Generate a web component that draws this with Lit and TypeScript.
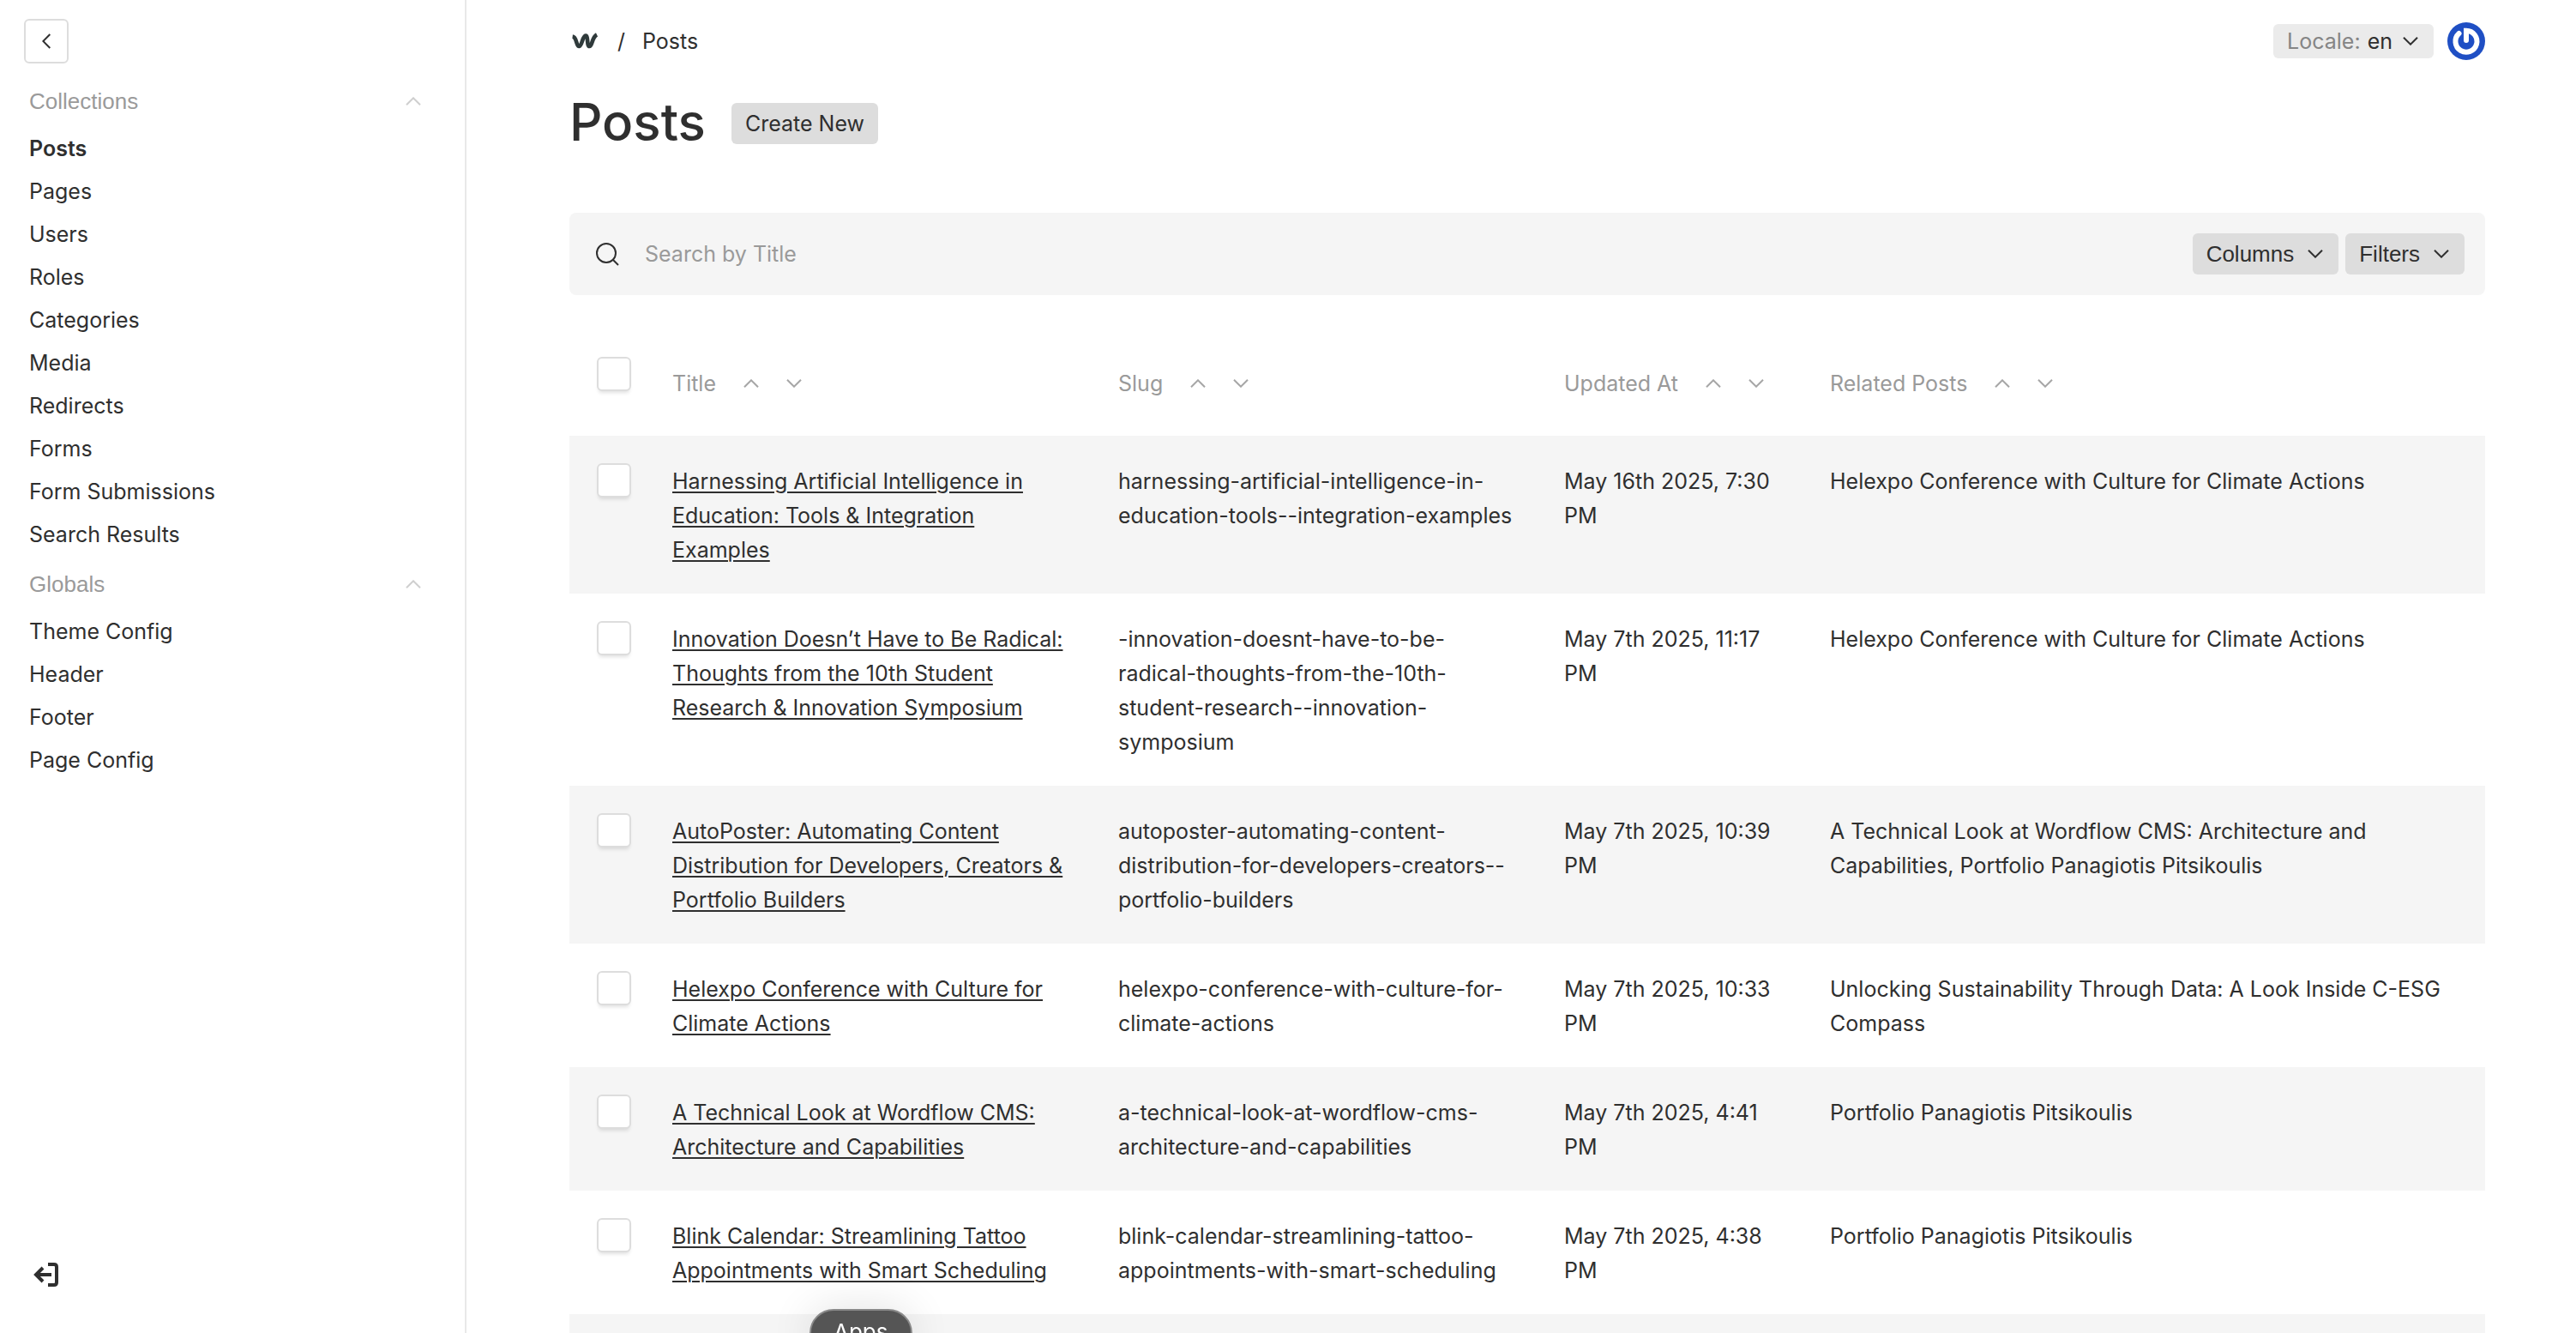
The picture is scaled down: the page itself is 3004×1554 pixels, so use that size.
import { LitElement, html, css, svg } from "lit";
import { customElement } from "lit/decorators.js";

type Row = { title: string; slug: string; updated: string; related: string };

const COLLECTIONS = ["Posts", "Pages", "Users", "Roles", "Categories", "Media", "Redirects", "Forms", "Form Submissions", "Search Results"];
const GLOBALS = ["Theme Config", "Header", "Footer", "Page Config"];
const COLUMNS = ["Title", "Slug", "Updated At", "Related Posts"];
const ROWS: Row[] = [
  { title: "Harnessing Artificial Intelligence in Education: Tools & Integration Examples", slug: "harnessing-artificial-intelligence-in-education-tools--integration-examples", updated: "May 16th 2025, 7:30 PM", related: "Helexpo Conference with Culture for Climate Actions" },
  { title: "Innovation Doesn’t Have to Be Radical: Thoughts from the 10th Student Research & Innovation Symposium", slug: "-innovation-doesnt-have-to-be-radical-thoughts-from-the-10th-student-research--innovation-symposium", updated: "May 7th 2025, 11:17 PM", related: "Helexpo Conference with Culture for Climate Actions" },
  { title: "AutoPoster: Automating Content Distribution for Developers, Creators & Portfolio Builders", slug: "autoposter-automating-content-distribution-for-developers-creators--portfolio-builders", updated: "May 7th 2025, 10:39 PM", related: "A Technical Look at Wordflow CMS: Architecture and Capabilities, Portfolio Panagiotis Pitsikoulis" },
  { title: "Helexpo Conference with Culture for Climate Actions", slug: "helexpo-conference-with-culture-for-climate-actions", updated: "May 7th 2025, 10:33 PM", related: "Unlocking Sustainability Through Data: A Look Inside C-ESG Compass" },
  { title: "A Technical Look at Wordflow CMS: Architecture and Capabilities", slug: "a-technical-look-at-wordflow-cms-architecture-and-capabilities", updated: "May 7th 2025, 4:41 PM", related: "Portfolio Panagiotis Pitsikoulis" },
  { title: "Blink Calendar: Streamlining Tattoo Appointments with Smart Scheduling", slug: "blink-calendar-streamlining-tattoo-appointments-with-smart-scheduling", updated: "May 7th 2025, 4:38 PM", related: "Portfolio Panagiotis Pitsikoulis" },
];

const chevron = (up: boolean) => html`<svg class="chevron" viewBox="0 0 18 10" aria-hidden="true">
  ${up ? svg`<path d="M1 9.3 9 1.3l8 8" />` : svg`<path d="M1 .7l8 8 8-8" />`}
</svg>`;

@customElement("app-root")
export class AppRoot extends LitElement {
  static styles = css`
    :host {
      display: block;
      --text: #2f2f2f;
      --muted: #9a9a9a;
      --line: #dddddd;
      --soft: #f5f5f5;
      color: var(--text);
      background: #fff;
      font-family: Inter, "Liberation Sans", sans-serif;
      font-size: 25px;
      line-height: 40px;
    }
    * { box-sizing: border-box; }
    button { font: inherit; color: inherit; border: 0; margin: 0; padding: 0; background: none; cursor: pointer; }
    a { color: inherit; text-decoration: none; }
    .shell { display: grid; grid-template-columns: 544px minmax(0, 1fr); height: 100vh; overflow: hidden; }
    .nav { display: flex; flex-direction: column; border-right: 2px solid #e8e8e8; padding: 22px 50px 52px 34px; }
    .collapse { width: 52px; height: 52px; margin: 0 0 11px -6px; border: 2px solid var(--line); border-radius: 6px; display: grid; place-items: center; }
    .collapse svg { width: 10px; height: 18px; }
    .group-toggle { display: flex; width: 100%; justify-content: space-between; align-items: center; padding: 13px 1px 10px 0; color: var(--muted); font-family: "Liberation Sans", Arial, sans-serif; font-size: 26px; }
    .group-toggle .chevron { stroke: #cfcfcf; }
    .links { list-style: none; margin: 0; padding: 0; }
    .links a { display: block; padding: 5px 0; }
    .links .active { font-weight: 600; }
    svg { fill: none; stroke: var(--text); stroke-width: 2; flex: none; }
    .logout { margin-top: auto; margin-left: 4px; width: 32px; height: 32px; }
    .logout svg { display: block; width: 32px; height: 32px; stroke-width: 4; }
    .chevron { width: 18px; height: 10px; display: block; }
    .main { padding: 26px 106px 0 120px; overflow: hidden; }
    .top { display: flex; align-items: center; height: 44px; }
    .crumbs { display: flex; align-items: center; gap: 20px; margin-right: auto; }
    .brand { width: 36px; height: 24px; display: block; stroke: #2f3a3b; stroke-width: 14; stroke-linejoin: round; }
    .locale { display: flex; align-items: center; gap: 8px; height: 40px; padding: 0 18px 0 16px; border-radius: 6px; background: #ebebeb; }
    .locale .chevron { margin-left: 4px; }
    .locale-label { color: #858585; }
    .avatar { width: 44px; height: 44px; margin-left: 16px; display: block; }
    .avatar svg { display: block; width: 44px; height: 44px; stroke: #fff; stroke-width: 6; stroke-linecap: round; }
    .heading { display: flex; align-items: center; gap: 30px; margin-top: 38px; height: 72px; }
    h1 { margin: 0; padding-bottom: 4px; font-size: 60px; line-height: 68px; font-weight: 500; }
    .btn { display: flex; align-items: center; gap: 16px; height: 48px; padding: 0 16px; border-radius: 6px; background: var(--line); }
    .search { display: flex; align-items: center; gap: 8px; margin-top: 68px; height: 96px; padding: 0 24px 0 30px; border-radius: 8px; background: var(--soft); }
    .search-icon { width: 28px; height: 28px; }
    .search input { flex: 1; min-width: 0; margin-left: 22px; padding: 0; border: 0; outline: 0; background: none; font: inherit; color: inherit; height: 48px; }
    .search input::placeholder { color: var(--muted); opacity: 1; }
    .search .btn { font-family: "Liberation Sans", Arial, sans-serif; font-size: 26px; }
    .btn .chevron { margin-right: 2px; }
    table { width: 100%; margin-top: 40px; table-layout: fixed; border-collapse: collapse; }
    .col-check { width: 96px; }
    .col-text { width: 520px; }
    .col-date { width: 310px; }
    th, td { padding: 33px 28px 31px 24px; text-align: left; vertical-align: top; font-weight: 400; }
    th:first-child, td:first-child { padding: 32px 0 32px 32px; }
    th:last-child, td:last-child { padding-right: 20px; }
    th { color: var(--muted); height: 124px; }
    th .label { display: flex; align-items: center; gap: 32px; padding-top: 10px; white-space: nowrap; }
    .sort { display: block; }
    .sort .chevron { stroke: #a6a6a6; }
    tbody tr:nth-child(odd) { background: var(--soft); }
    td a { text-decoration: underline; text-decoration-thickness: 2px; text-underline-offset: 3px; }
    .check { appearance: none; display: block; width: 40px; height: 40px; margin: 0; border: 2px solid var(--line); border-radius: 6px; background: #fff; box-shadow: 0 4px 4px -2px rgba(0, 0, 0, 0.12); }
    .next td { height: 144px; }
    .dock-tip { position: fixed; left: 944px; top: 100vh; margin-top: -28px; height: 56px; padding: 0 26px; border-radius: 28px; background: #555; border: 2px solid #8a8a8a; color: #fff; line-height: 50px; font-size: 26px; box-shadow: 0 0 50px rgba(0, 0, 0, 0.12); }
  `;

  private navGroup(label: string, items: string[], active = "") {
    return html`<section>
      <button class="group-toggle" type="button" aria-expanded="true">${label}${chevron(true)}</button>
      <ul class="links">
        ${items.map((i) => html`<li><a href="#" class=${i === active ? "active" : "link"}>${i}</a></li>`)}
      </ul>
    </section>`;
  }

  render() {
    return html`
      <div class="shell">
        <nav class="nav">
          <button class="collapse" type="button" aria-label="Collapse menu">
            <svg viewBox="0 0 10 18"><path d="M9.3 1 1.3 9l8 8" /></svg>
          </button>
          ${this.navGroup("Collections", COLLECTIONS, "Posts")}
          ${this.navGroup("Globals", GLOBALS)}
          <a class="logout" href="#" aria-label="Log out">
            <svg viewBox="0 0 32 32"><path d="M18 4h7q3 0 3 3v18q0 3-3 3h-7M22 16H4M12 8l-8 8 8 8" /></svg>
          </a>
        </nav>
        <main class="main">
          <header class="top">
            <div class="crumbs">
              <a href="#" aria-label="Dashboard"><svg class="brand" viewBox="12 18 108 72"><path d="M23 38C39 40 35 72 46 72 57 70 57 36 69 35 79 36 72 72 82 72 93 72 90 40 108 31" /></svg></a>
              <span>/</span><span>Posts</span>
            </div>
            <button class="locale" type="button"><span class="locale-label">Locale:</span><span>en</span>${chevron(false)}</button>
            <a class="avatar" href="#" aria-label="Account">
              <svg viewBox="0 0 44 44"><circle cx="22" cy="22" r="22" fill="#1f4fc4" stroke="none" /><path d="M13.500 13A12.500 12.500 0 1 0 22 9.700V21" /></svg>
            </a>
          </header>
          <div class="heading"><h1>Posts</h1><a class="btn" href="#">Create New</a></div>
          <div class="search">
            <svg class="search-icon" viewBox="0 0 28 28"><circle cx="13" cy="13" r="11" /><path d="M20.500 20.500 27 27" /></svg>
            <input type="text" placeholder="Search by Title" aria-label="Search by Title" />
            <button class="btn" type="button">Columns${chevron(false)}</button>
            <button class="btn" type="button">Filters${chevron(false)}</button>
          </div>
          <table>
            <colgroup><col class="col-check" /><col class="col-text" /><col class="col-text" /><col class="col-date" /><col /></colgroup>
            <thead>
              <tr>
                <th><input class="check" type="checkbox" aria-label="Select all" /></th>
                ${COLUMNS.map((c) => html`<th><div class="label">${c}
                  <button class="sort" type="button" aria-label="Sort ${c} ascending">${chevron(true)}</button>
                  <button class="sort" type="button" aria-label="Sort ${c} descending">${chevron(false)}</button></div></th>`)}
              </tr>
            </thead>
            <tbody>
              ${ROWS.map((r) => html`<tr>
                <td><input class="check" type="checkbox" aria-label="Select ${r.title}" /></td>
                <td><a href="#">${r.title}</a></td><td>${r.slug}</td><td>${r.updated}</td><td>${r.related}</td>
              </tr>`)}
              <tr class="next"><td colspan="5"></td></tr>
            </tbody>
          </table>
        </main>
      </div>
      <div class="dock-tip">Apps</div>
    `;
  }
}
